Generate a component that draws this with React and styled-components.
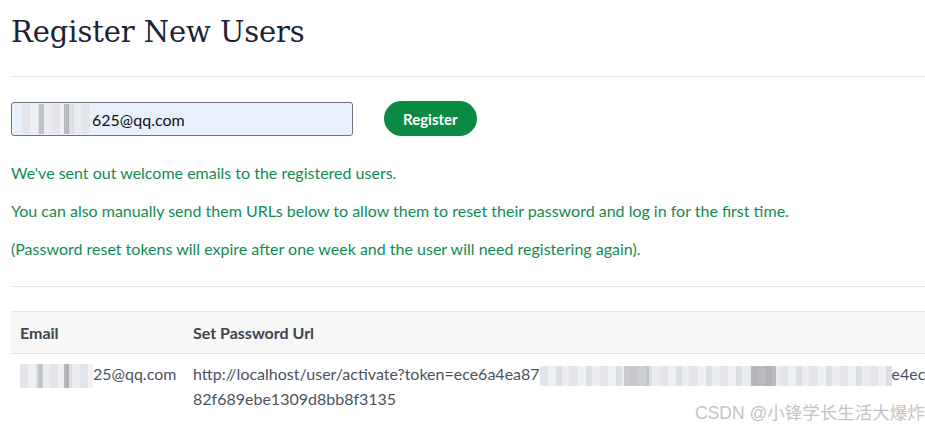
import React from "react";
import styled, { createGlobalStyle } from "styled-components";

const Global = createGlobalStyle`
  html, body { margin: 0; padding: 0; background: #fff; overflow: hidden; }
  body { font-family: Lato, "Noto Sans", sans-serif; }
`;

const Page = styled.div`
  width: 1040px;
  padding: 0 0 0 11px;
  box-sizing: border-box;
`;

const Title = styled.h1`
  font-family: "DejaVu Serif", "Liberation Serif", serif;
  font-weight: 400;
  font-size: 29px;
  letter-spacing: -0.1px;
  color: #1b2333;
  margin: 0;
  padding-top: 12px;
  line-height: 40px;
  height: 40px;
`;

const Rule = styled.hr`
  border: 0;
  border-top: 1px solid #e5e7eb;
  margin: ${(p) => p.$m || "24px 0 0 0"};
`;

const FormRow = styled.div`
  display: flex;
  align-items: center;
  gap: 31px;
  margin-top: 25px;
`;

const Input = styled.div`
  width: 342px;
  height: 34px;
  box-sizing: border-box;
  background: #e8f0fe;
  border: 1px solid #6b7280;
  border-radius: 3px;
  display: flex;
  align-items: center;
  font-size: 16px;
  color: #111;
  padding-left: 10px;
`;

const Blur = styled.span`
  display: inline-block;
  width: ${(p) => p.$w}px;
  height: ${(p) => p.$h || 28}px;
  vertical-align: middle;
  background:
    linear-gradient(90deg, transparent 0 24%, rgba(120,120,130,.28) 24% 31%, transparent 31% 60%, rgba(110,110,120,.4) 60% 67%, transparent 67%),
    repeating-linear-gradient(90deg, #e3e5ea 0 8px, #eef0f3 8px 16px, #dcdfe5 16px 22px, #eaecf0 22px 30px);
`;

const Button = styled.button`
  height: 35px;
  padding: 0 19px;
  border: 0;
  border-radius: 18px;
  background: #0b8a43;
  color: #fff;
  font-family: Lato, sans-serif;
  font-weight: 700;
  font-size: 15px;
  margin-top: -1px;
`;

const Notes = styled.div`
  margin-top: 26px;
  display: flex;
  flex-direction: column;
  gap: 17px;
`;

const Note = styled.p`
  margin: 0;
  font-size: 16px;
  line-height: 21px;
  color: #138a52;
`;

const Table = styled.div`
  margin-top: 24px;
  display: grid;
  grid-template-columns: 173px 1fr;
  width: 1000px;
  border-top: 1px solid #e3e5e8;
`;

const HeadCell = styled.div`
  background: #f7f7f7;
  font-weight: 700;
  font-size: 16px;
  color: #3d4550;
  padding: 10px 9px;
  height: 42px;
  box-sizing: border-box;
  border-bottom: 1px solid #e3e5e8;
  display: flex;
  align-items: center;
`;

const Cell = styled.div`
  font-size: 16px;
  line-height: 25px;
  color: #4a5361;
  padding: 7px 9px;
  white-space: nowrap;
`;

const Watermark = styled.div`
  position: absolute;
  left: 695px;
  top: 399px;
  font-family: "Liberation Sans", "Noto Sans CJK SC", sans-serif;
  font-size: 17.5px;
  color: #c4c4c4;
  white-space: nowrap;
`;

export default function App() {
  return (
    <>
      <Global />
      <Page>
        <Title>Register New Users</Title>
        <Rule $m="24px 0 0 0" />
        <FormRow>
          <Input>
            <Blur $w={70} $h={30} />
            625@qq.com
          </Input>
          <Button>Register</Button>
        </FormRow>
        <Notes>
          <Note>We've sent out welcome emails to the registered users.</Note>
          <Note>
            You can also manually send them URLs below to allow them to reset their password and log in for the first time.
          </Note>
          <Note>
            (Password reset tokens will expire after one week and the user will need registering again).
          </Note>
        </Notes>
        <Rule $m="27px 0 0 0" />
        <Table>
          <HeadCell>Email</HeadCell>
          <HeadCell>Set Password Url</HeadCell>
          <Cell>
            <Blur $w={73} $h={24} />
            25@qq.com
          </Cell>
          <Cell>
            http://localhost/user/activate?token=ece6a4ea87
            <Blur $w={352} $h={20} />
            e4ecb9a1d
            <br />
            82f689ebe1309d8bb8f3135
          </Cell>
        </Table>
      </Page>
      <Watermark>CSDN @小锋学长生活大爆炸</Watermark>
    </>
  );
}
